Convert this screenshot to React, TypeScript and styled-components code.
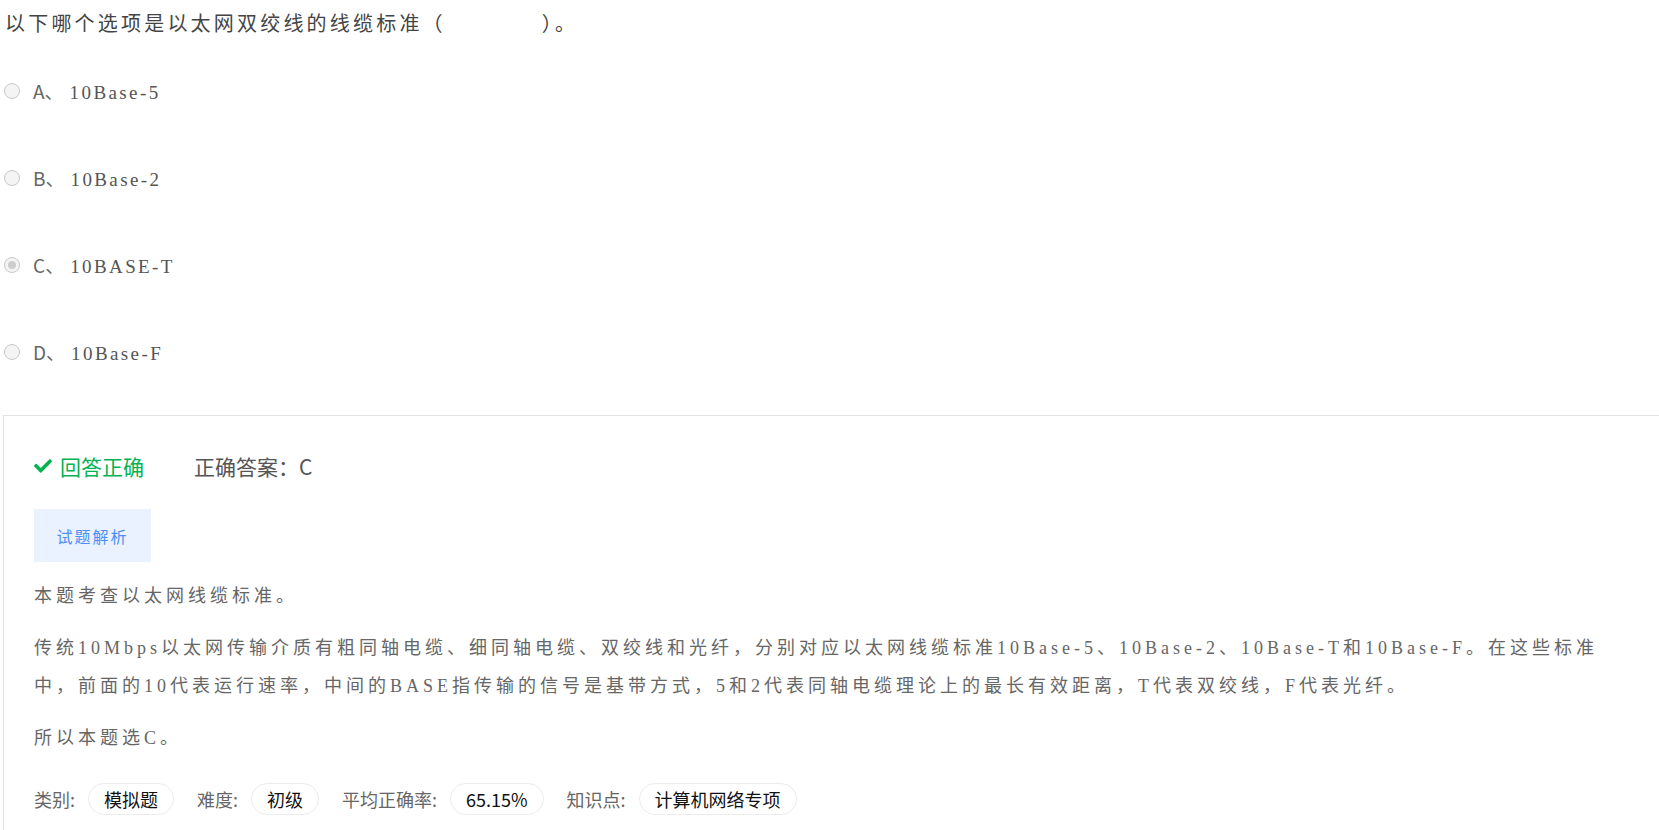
import { createGlobalStyle } from 'styled-components';
import styled from 'styled-components';
import { FaCheck } from 'react-icons/fa';

const GlobalStyle = createGlobalStyle`
  html, body {
    margin: 0;
    padding: 0;
    background: #fff;
    overflow-x: hidden;
  }
  body {
    font-family: 'Liberation Sans', 'Noto Sans CJK SC', sans-serif;
  }
`;

const Page = styled.div`
  padding: 8px 0 0 3px;
`;

const Title = styled.div`
  margin-left: 2px;
  font-family: 'Noto Sans CJK SC', sans-serif;
  font-size: 20px;
  line-height: 30px;
  letter-spacing: 3.2px;
  color: #444;
`;

const Blank = styled.span`
  display: inline-block;
  width: 96px;
`;

const OptionList = styled.div`
  margin-top: 40px;
  display: flex;
  flex-direction: column;
  gap: 57px;
`;

const OptionRow = styled.label`
  display: flex;
  align-items: center;
  height: 30px;
  padding-left: 1px;
`;

const Radio = styled.span<{ $checked?: boolean }>`
  width: 14px;
  height: 14px;
  border-radius: 50%;
  border: 1px solid #c8c8c8;
  background: #f4f4f4;
  display: flex;
  align-items: center;
  justify-content: center;
  margin-right: 13px;
  margin-top: -5px;

  &::after {
    content: '';
    display: ${(p) => (p.$checked ? 'block' : 'none')};
    width: 8px;
    height: 8px;
    border-radius: 50%;
    background: #cdcdcd;
  }
`;

const OptionKey = styled.span`
  font-family: 'Noto Sans CJK SC', sans-serif;
  font-size: 19px;
  color: #666;
  margin-top: -5px;
  margin-right: 6px;
`;

const OptionText = styled.span`
  font-family: 'Liberation Serif', 'Noto Sans CJK SC', serif;
  font-size: 19px;
  letter-spacing: 2.4px;
  color: #555;
`;

const Panel = styled.div`
  margin-top: 46px;
  border: 1px solid #e3e3e3;
  border-right: none;
  padding: 35px 30px 30px 30px;
`;

const ResultRow = styled.div`
  display: flex;
  align-items: center;
  height: 30px;
  gap: 50px;
  font-family: 'Noto Sans CJK SC', sans-serif;
  font-size: 21px;
`;

const Correct = styled.span`
  display: flex;
  align-items: center;
  gap: 8px;
  color: #03b351;

  svg {
    width: 18px;
    height: 18px;
  }
`;

const Answer = styled.span`
  color: #555;
`;

const TabButton = styled.button`
  margin-top: 28px;
  width: 117px;
  height: 53px;
  border: none;
  background: #ebf2ff;
  color: #4b8ff5;
  font-family: 'Noto Sans CJK SC', sans-serif;
  font-size: 16px;
  letter-spacing: 2px;
  padding: 0;
  cursor: pointer;
`;

const Analysis = styled.div`
  margin-top: 15px;
  display: flex;
  flex-direction: column;
  gap: 14px;
`;

const Para = styled.p`
  margin: 0;
  font-family: 'Liberation Serif', 'Noto Sans CJK SC', serif;
  font-size: 18px;
  line-height: 38px;
  letter-spacing: 4px;
  color: #666;
  padding-right: 10px;
`;

const MetaRow = styled.div`
  margin-top: 26px;
  display: flex;
  align-items: center;
  font-family: 'Noto Sans CJK SC', sans-serif;
  font-size: 18px;
`;

const MetaItem = styled.div`
  display: flex;
  align-items: center;
  gap: 13px;
  margin-right: 23px;
`;

const MetaLabel = styled.span`
  color: #666;
`;

const Pill = styled.span`
  height: 30px;
  line-height: 30px;
  padding: 0 15px;
  border: 1px solid #ececec;
  border-radius: 16px;
  color: #111;
`;

const options = [
  { key: 'A', text: '10Base-5' },
  { key: 'B', text: '10Base-2' },
  { key: 'C', text: '10BASE-T', checked: true },
  { key: 'D', text: '10Base-F' },
];

const meta = [
  { label: '类别:', value: '模拟题' },
  { label: '难度:', value: '初级' },
  { label: '平均正确率:', value: '65.15%' },
  { label: '知识点:', value: '计算机网络专项' },
];

const App = () => {
  return (
    <>
      <GlobalStyle />
      <Page>
        <Title>
          以下哪个选项是以太网双绞线的线缆标准（<Blank />）。
        </Title>
        <OptionList>
          {options.map((o) => (
            <OptionRow key={o.key}>
              <Radio $checked={o.checked} />
              <OptionKey>{o.key}、</OptionKey>
              <OptionText>{o.text}</OptionText>
            </OptionRow>
          ))}
        </OptionList>
        <Panel>
          <ResultRow>
            <Correct>
              <FaCheck />
              回答正确
            </Correct>
            <Answer>正确答案：C</Answer>
          </ResultRow>
          <TabButton>试题解析</TabButton>
          <Analysis>
            <Para>本题考查以太网线缆标准。</Para>
            <Para>
              传统10Mbps以太网传输介质有粗同轴电缆、细同轴电缆、双绞线和光纤，分别对应以太网线缆标准10Base-5、10Base-2、10Base-T和10Base-F。在这些标准中，前面的10代表运行速率，中间的BASE指传输的信号是基带方式，5和2代表同轴电缆理论上的最长有效距离，T代表双绞线，F代表光纤。
            </Para>
            <Para>所以本题选C。</Para>
          </Analysis>
          <MetaRow>
            {meta.map((m) => (
              <MetaItem key={m.label}>
                <MetaLabel>{m.label}</MetaLabel>
                <Pill>{m.value}</Pill>
              </MetaItem>
            ))}
          </MetaRow>
        </Panel>
      </Page>
    </>
  );
};

export default App;
